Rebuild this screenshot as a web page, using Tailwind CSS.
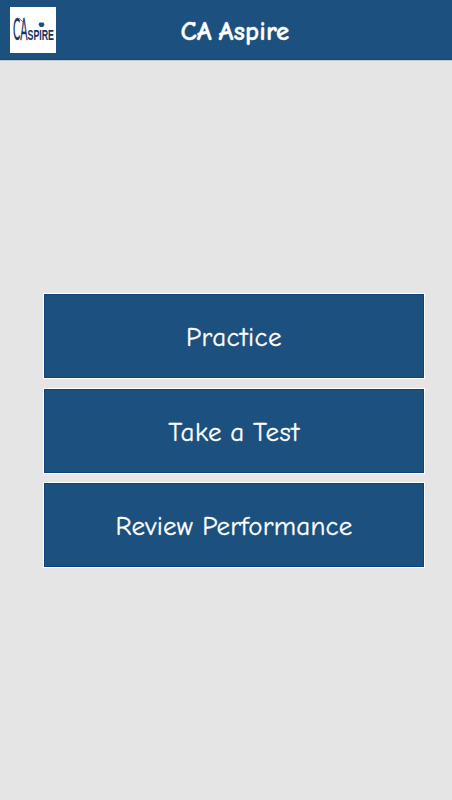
<!DOCTYPE html>
<html lang="en">

<head>
   <meta charset="UTF-8">
   <meta name="viewport" content="width=device-width, initial-scale=1.0">
   <script src="https://cdn.jsdelivr.net/npm/@tailwindcss/browser@4"></script>
   <title>CA Aspire</title>
</head>

<body class="bg-[#e5e5e5] font-['Choco_cooky','Comic_Neue',Lato,sans-serif] text-white">

   <div class="h-screen flex flex-col overflow-hidden">

      <header class="grid grid-cols-[56px_1fr_56px] items-center h-[60px] shrink-0 bg-[#1c507e] border-b border-[#174572] shadow-[0_1px_0_#c3c9cf]">
         <div class="ml-[10px] w-[46px] h-[46px] bg-white">
            <svg viewBox="0 0 46 46" class="w-full h-full" fill="#17335f">
               <text x="3" y="33" font-family="Lato" font-size="31" textLength="14.500" lengthAdjust="spacingAndGlyphs" stroke="#17335f" stroke-width=".3">CA</text>
               <text x="17.500" y="33" font-family="Liberation Sans" font-weight="bold" font-size="14" textLength="26.500" lengthAdjust="spacingAndGlyphs">SPIRE</text>
               <path d="M29.500 15.500h4l1 2-1.500 2.500h-3l-1.500-2.500z" fill="#1c5273" />
               <path d="M9 11l5 5" fill="none" stroke="#51647f" stroke-width=".8" />
            </svg>
         </div>
         <h1 class="text-center text-[27px] leading-none font-bold tracking-[0.1px] [word-spacing:-3px] pl-[18px] pt-[3px] [-webkit-text-stroke:0.3px_white]">CA Aspire</h1>
      </header>

      <main class="flex flex-col gap-[8.5px] pt-[233px] pl-[43px] pr-[27px] text-[27px] [-webkit-text-stroke:0.3px_white]">
         <button class="flex items-center justify-center h-[86px] border border-white bg-[#1c507e] shadow-[inset_0_0_0_1px_#0d437a] pt-[4px]">
            <span class="tracking-[0.4px]">Practice</span>
         </button>
         <button class="flex items-center justify-center h-[86px] border border-white bg-[#1c507e] shadow-[inset_0_0_0_1px_#0d437a] pt-[5px]">
            <span class="tracking-[0.6px] [word-spacing:-1.5px]">Take a Test</span>
         </button>
         <button class="flex items-center justify-center h-[86px] border border-white bg-[#1c507e] shadow-[inset_0_0_0_1px_#0d437a] pt-[5px]">
            <span class="tracking-[0.2px]">Review Performance</span>
         </button>
      </main>

   </div>
</body>

</html>
